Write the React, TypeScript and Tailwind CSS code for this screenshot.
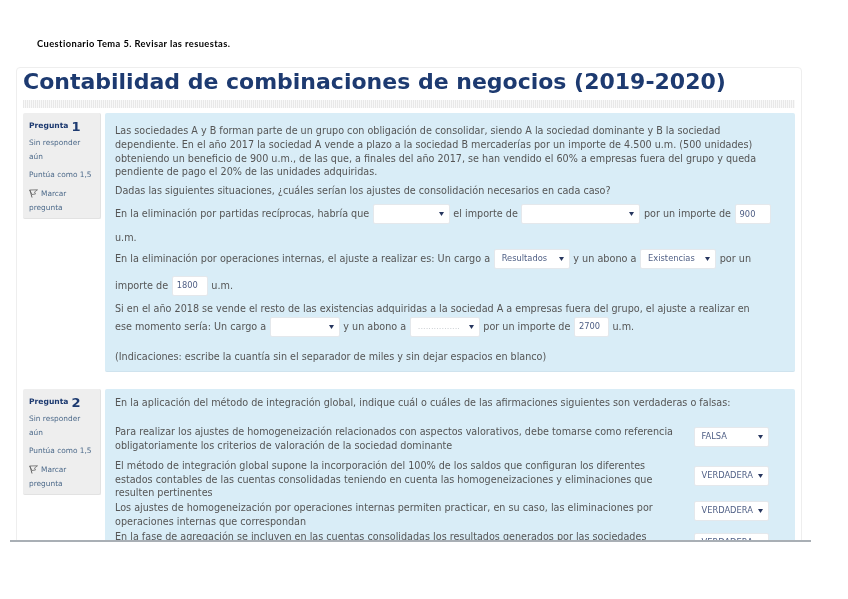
const font = "font-['DejaVu_Sans',sans-serif]";

function Select({ width, value, small }: { width: string; value?: string; small?: boolean }) {
  return (
    <span className={`mx-[0.5px] inline-flex h-[20px] items-center justify-between rounded-[2px] border border-[#e4e8ec] bg-white pl-[7px] pr-[4px] align-middle text-[8.3px] text-[#4f5f85] ${width}`}>
      <span className={small ? "text-[#c8ccd0]" : ""}>{value}</span>
      <svg width="5" height="4" viewBox="0 0 5 4" className="mr-[1px] shrink-0">
        <path d="M0 0h5L2.5 4z" fill="#27365f" />
      </svg>
    </span>
  );
}

function NumInput({ value, width = "w-[36px]" }: { value: string; width?: string }) {
  return (
    <span className={`mx-[0.5px] inline-flex h-[20px] items-center rounded-[2px] border border-[#e4e8ec] bg-white pl-[4px] align-middle text-[8.3px] text-[#4f5f85] ${width}`}>
      {value}
    </span>
  );
}

function Flag() {
  return (
    <svg width="9" height="9" viewBox="0 0 9 9" className="mr-[3px] inline-block align-[-2px]">
      <path d="M0.5 1 L8.5 0.8 L5.5 3 L6.5 5 L3 5.5 Z" fill="none" stroke="#777" strokeWidth="0.9" />
      <path d="M1 1 L3 8.5" stroke="#666" strokeWidth="1" />
    </svg>
  );
}

function QuestionInfo({ num }: { num: number }) {
  return (
    <div className="h-[106px] w-[78px] shrink-0 rounded-[2px] border-b border-r border-[#e2e2e2] bg-[#eeeeee] pl-[6px] pt-[6px] text-[7.4px] text-[#4d6a8a]">
      <div className="flex h-[14px] items-center gap-[3px] font-bold text-[#1d3a70]">
        <span className="text-[7.6px]">Pregunta</span>
        <span className="text-[13px] leading-none">{num}</span>
      </div>
      <div className="mt-[3px] w-[60px] leading-[14px]">Sin responder aún</div>
      <div className="mt-[4px] leading-[14px]">Puntúa como 1,5</div>
      <div className="mt-[5px] w-[60px] leading-[14px]">
        <Flag />
        Marcar pregunta
      </div>
    </div>
  );
}

const rows = [
  { text: "Para realizar los ajustes de homogeneización relacionados con aspectos valorativos, debe tomarse como referencia obligatoriamente los criterios de valoración de la sociedad dominante", value: "FALSA", h: "h-[34px]", mt: "mt-[2px]" },
  { text: "El método de integración global supone la incorporación del 100% de los saldos que configuran los diferentes estados contables de las cuentas consolidadas teniendo en cuenta las homogeneizaciones y eliminaciones que resulten pertinentes", value: "VERDADERA", h: "h-[42px]", mt: "mt-[7px]" },
  { text: "Los ajustes de homogeneización por operaciones internas permiten practicar, en su caso, las eliminaciones por operaciones internas que correspondan", value: "VERDADERA", h: "h-[29px]", mt: "mt-[0px]" },
  { text: "En la fase de agregación se incluyen en las cuentas consolidadas los resultados generados por las sociedades dependientes durante el ejercicio", value: "VERDADERA", h: "h-[29px]", mt: "mt-[3px]" },
];

export default function App() {
  return (
    <div className={`h-[599px] w-[848px] overflow-hidden bg-white blur-[0.3px] ${font}`}>
      <div className="ml-[10px] h-[542px] w-[801px] overflow-hidden border-b-2 border-[#a9afb5]">
        <div className="pl-[27px] pt-[37px] font-['Lato',sans-serif] text-[9.3px] font-bold leading-[13px] tracking-[0.42px] text-black">
          Cuestionario Tema 5. Revisar las resuestas.
        </div>
        <div className="ml-[6px] mt-[17px] w-[786px] rounded-[4px] border border-[#eeeeee] px-[6px] pt-[1px]">
          <h1 className="h-[31px] text-[22px] font-bold leading-[26px] text-[#1d3a70]">
            Contabilidad de combinaciones de negocios (2019-2020)
          </h1>
          <div className="h-[8px] w-[772px] bg-[repeating-linear-gradient(90deg,#e8e8e8_0,#e8e8e8_1px,#f8f8f8_1px,#f8f8f8_2px)]" />

          <div className="mt-[5px] flex gap-[4px]">
            <QuestionInfo num={1} />
            <div className="h-[259px] w-[690px] rounded-[2px] border-b border-[#cfe3ee] bg-[#d9edf7] px-[10px] pt-[11px] text-[9.65px] leading-[13.8px] text-[#555555]">
              <p className="w-[660px]">
                Las sociedades A y B forman parte de un grupo con obligación de consolidar, siendo A la sociedad dominante y B la sociedad dependiente. En el año 2017 la sociedad A vende a plazo a la sociedad B mercaderías por un importe de 4.500 u.m. (500 unidades) obteniendo un beneficio de 900 u.m., de las que, a finales del año 2017, se han vendido el 60% a empresas fuera del grupo y queda pendiente de pago el 20% de las unidades adquiridas.
              </p>
              <p className="mt-[5px]">Dadas las siguientes situaciones, ¿cuáles serían los ajustes de consolidación necesarios en cada caso?</p>
              <p className="mt-[4px] w-[658px] leading-[24px]">
                En la eliminación por partidas recíprocas, habría que <Select width="w-[77px]" /> el importe de <Select width="w-[119px]" /> por un importe de <NumInput value="900" /> u.m.
              </p>
              <p className="-mt-[5px] w-[658px] text-[9.7px] leading-[27px]">
                En la eliminación por operaciones internas, el ajuste a realizar es: Un cargo a <Select width="w-[76px]" value="Resultados" /> y un abono a <Select width="w-[76px]" value="Existencias" /> por un importe de <NumInput value="1800" /> u.m.
              </p>
              <p className="mt-[1px] w-[645px] leading-[17px]">
                Si en el año 2018 se vende el resto de las existencias adquiridas a la sociedad A a empresas fuera del grupo, el ajuste a realizar en ese momento sería: Un cargo a <Select width="w-[70px]" /> y un abono a <Select width="w-[70px]" value="................" small /> por un importe de <NumInput value="2700" width="w-[35px]" /> u.m.
              </p>
              <p className="mt-[13px]">(Indicaciones: escribe la cuantía sin el separador de miles y sin dejar espacios en blanco)</p>
            </div>
          </div>

          <div className="mt-[17px] flex gap-[4px]">
            <QuestionInfo num={2} />
            <div className="w-[690px] rounded-[2px] bg-[#d9edf7] px-[10px] pt-[7px] text-[9.65px] leading-[13.8px] text-[#555555]">
              <p>En la aplicación del método de integración global, indique cuál o cuáles de las afirmaciones siguientes son verdaderas o falsas:</p>
              <div className="mt-[15px]">
                {rows.map((row) => (
                  <div key={row.value + row.h + row.mt} className={`flex justify-between ${row.h}`}>
                    <p className="w-[560px]">{row.text}</p>
                    <div className={`mr-[16px] ${row.mt}`}>
                      <Select width="w-[75px]" value={row.value} />
                    </div>
                  </div>
                ))}
              </div>
            </div>
          </div>
        </div>
      </div>
    </div>
  );
}
